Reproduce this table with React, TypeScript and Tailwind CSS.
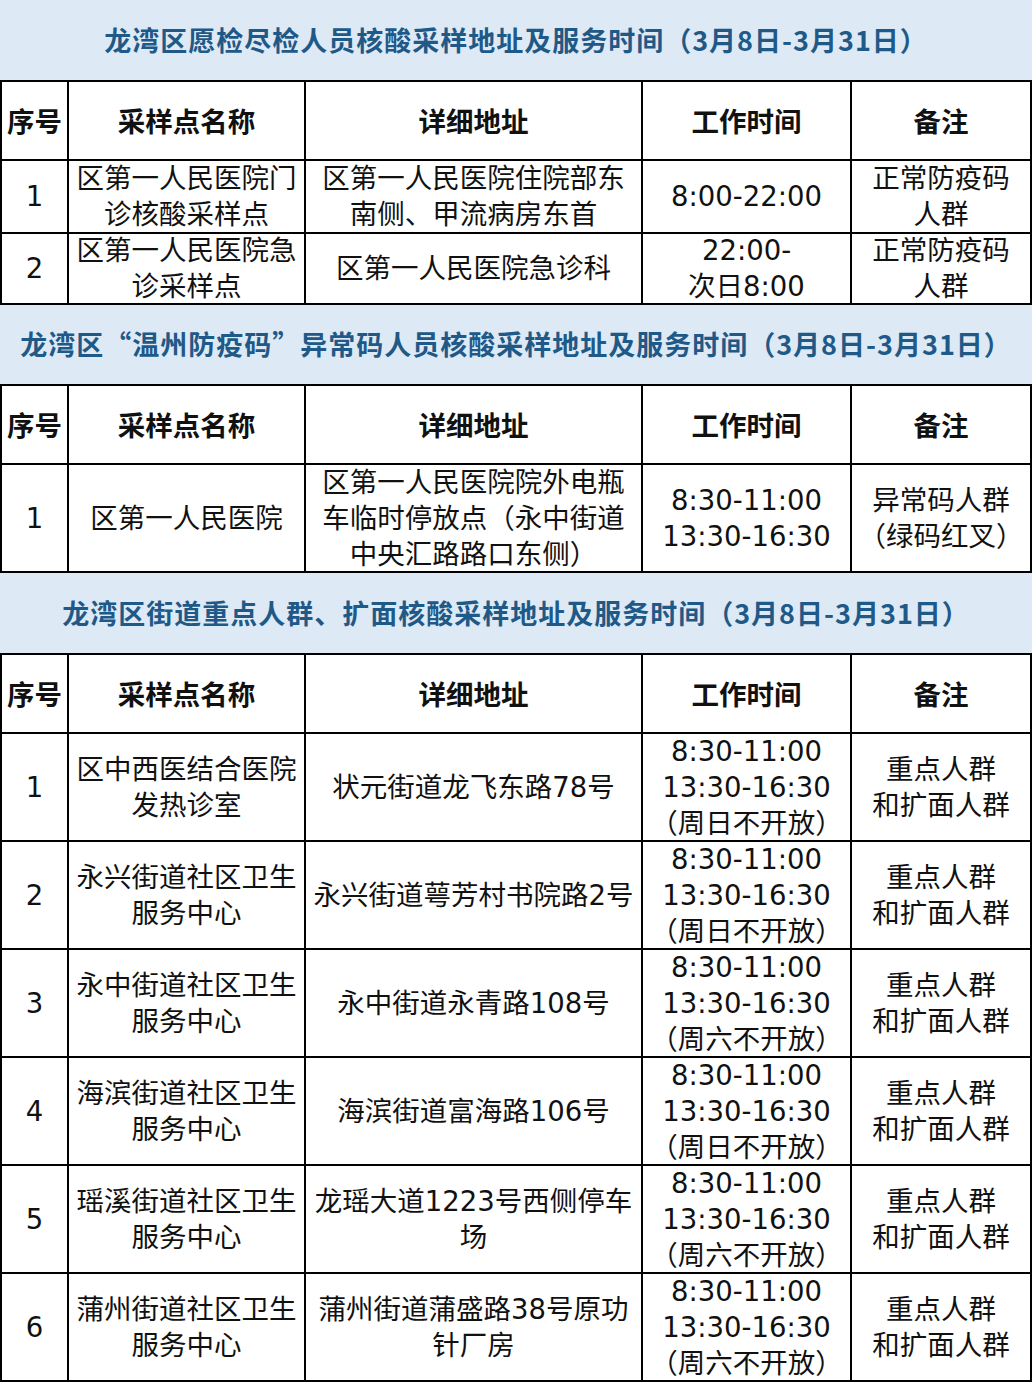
import React from "react";

const FONT = { fontFamily: '"Noto Sans CJK SC", "Noto Sans", sans-serif' };
const CELLFONT = { fontFamily: '"DejaVu Sans", "Noto Sans CJK SC", sans-serif' };

type Row = { h: string; cells: string[][] };

const COLS = "grid-cols-[65px_235px_335px_207px_178px]";

function Title({ text }: { text: string }) {
  return (
    <div className="h-[80px] bg-[#dde9f5] flex items-center justify-center">
      <span className="text-[27px] font-semibold text-[#1f5987] tracking-[1px] whitespace-nowrap">{text}</span>
    </div>
  );
}

function Header() {
  const hs = ["序号", "采样点名称", "详细地址", "工作时间", "备注"];
  return (
    <>
      {hs.map((t, i) => (
        <div key={i} className="bg-white h-[77px] flex items-center justify-center text-[27.5px] font-bold text-[#111] whitespace-nowrap">
          {t}
        </div>
      ))}
    </>
  );
}

function Cells({ row }: { row: Row }) {
  return (
    <>
      {row.cells.map((lines, i) => (
        <div
          key={i}
          className={`bg-white ${row.h} flex flex-col items-center justify-center text-[27.5px] leading-[36px] text-[#111] whitespace-nowrap`}
          style={CELLFONT}
        >
          {lines.map((l, j) => (
            <span key={j}>{l}</span>
          ))}
        </div>
      ))}
    </>
  );
}

function Table({ rows }: { rows: Row[] }) {
  return (
    <div className={`grid ${COLS} gap-[2px] bg-black p-[2px]`}>
      <Header />
      {rows.map((r, i) => (
        <Cells key={i} row={r} />
      ))}
    </div>
  );
}

const t1: Row[] = [
  {
    h: "h-[71px]",
    cells: [["1"], ["区第一人民医院门", "诊核酸采样点"], ["区第一人民医院住院部东", "南侧、甲流病房东首"], ["8:00-22:00"], ["正常防疫码", "人群"]],
  },
  {
    h: "h-[69px]",
    cells: [["2"], ["区第一人民医院急", "诊采样点"], ["区第一人民医院急诊科"], ["22:00-", "次日8:00"], ["正常防疫码", "人群"]],
  },
];

const t2: Row[] = [
  {
    h: "h-[106px]",
    cells: [
      ["1"],
      ["区第一人民医院"],
      ["区第一人民医院院外电瓶", "车临时停放点（永中街道", "中央汇路路口东侧）"],
      ["8:30-11:00", "13:30-16:30"],
      ["异常码人群", "（绿码红叉）"],
    ],
  },
];

const mk = (n: string, name: string[], addr: string[], day: string): Row => ({
  h: "h-[106px]",
  cells: [[n], name, addr, ["8:30-11:00", "13:30-16:30", `（${day}不开放）`], ["重点人群", "和扩面人群"]],
});

const t3: Row[] = [
  mk("1", ["区中西医结合医院", "发热诊室"], ["状元街道龙飞东路78号"], "周日"),
  mk("2", ["永兴街道社区卫生", "服务中心"], ["永兴街道萼芳村书院路2号"], "周日"),
  mk("3", ["永中街道社区卫生", "服务中心"], ["永中街道永青路108号"], "周六"),
  mk("4", ["海滨街道社区卫生", "服务中心"], ["海滨街道富海路106号"], "周日"),
  mk("5", ["瑶溪街道社区卫生", "服务中心"], ["龙瑶大道1223号西侧停车", "场"], "周六"),
  mk("6", ["蒲州街道社区卫生", "服务中心"], ["蒲州街道蒲盛路38号原功", "针厂房"], "周六"),
];

export default function App() {
  return (
    <div className="w-[1032px] h-[1382px] bg-white flex flex-col" style={FONT}>
      <Title text="龙湾区愿检尽检人员核酸采样地址及服务时间（3月8日-3月31日）" />
      <Table rows={t1} />
      <Title text="龙湾区“温州防疫码”异常码人员核酸采样地址及服务时间（3月8日-3月31日）" />
      <Table rows={t2} />
      <Title text="龙湾区街道重点人群、扩面核酸采样地址及服务时间（3月8日-3月31日）" />
      <Table rows={t3} />
    </div>
  );
}
